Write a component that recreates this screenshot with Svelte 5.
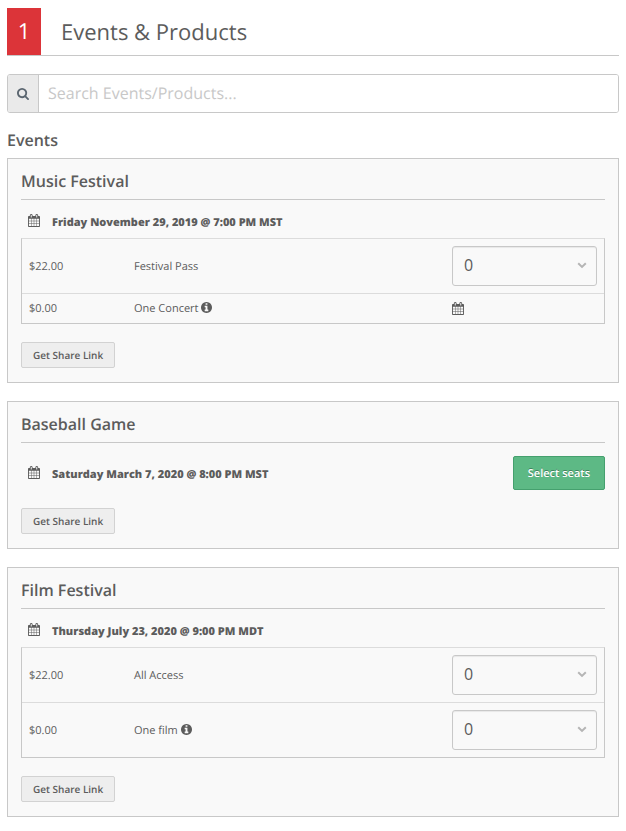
<script lang="ts">
	type Product = {
		id: string;
		price: string;
		name: string;
		info?: boolean;
		pickDate?: boolean;
		quantity: number;
	};

	type EventItem = {
		title: string;
		date: string;
		seated?: boolean;
		products: Product[];
	};

	let search = $state('');

	let events: EventItem[] = $state([
		{
			title: 'Music Festival',
			date: 'Friday November 29, 2019 @ 7:00 PM MST',
			products: [
				{ id: 'festival-pass', price: '$22.00', name: 'Festival Pass', quantity: 0 },
				{ id: 'one-concert', price: '$0.00', name: 'One Concert', info: true, pickDate: true, quantity: 0 }
			]
		},
		{
			title: 'Baseball Game',
			date: 'Saturday March 7, 2020 @ 8:00 PM MST',
			seated: true,
			products: []
		},
		{
			title: 'Film Festival',
			date: 'Thursday July 23, 2020 @ 9:00 PM MDT',
			products: [
				{ id: 'all-access', price: '$22.00', name: 'All Access', quantity: 0 },
				{ id: 'one-film', price: '$0.00', name: 'One film', info: true, quantity: 0 }
			]
		}
	]);

	const quantities = [0, 1, 2, 3, 4, 5, 6, 7, 8, 9, 10];
</script>

{#snippet calendarIcon()}
	<svg class="calendar" viewBox="64 0 1664 1792" width="12" height="13" aria-hidden="true">
		<path d="M192 1664h288v-288h-288v288zm352 0h320v-288h-320v288zm-352-352h288v-320h-288v320zm352 0h320v-320h-320v320zm-352-384h288v-288h-288v288zm736 736h320v-288h-320v288zm-384-736h320v-288h-320v288zm768 736h288v-288h-288v288zm-384-352h320v-320h-320v320zm-352-864v-288q0-13-9.5-22.5t-22.5-9.5h-64q-13 0-22.5 9.5t-9.5 22.5v288q0 13 9.5 22.5t22.5 9.5h64q13 0 22.5-9.5t9.5-22.5zm736 864h288v-320h-288v320zm-384-384h320v-288h-320v288zm384 0h288v-288h-288v288zm32-480v-288q0-13-9.5-22.5t-22.5-9.5h-64q-13 0-22.5 9.5t-9.5 22.5v288q0 13 9.5 22.5t22.5 9.5h64q13 0 22.5-9.5t9.5-22.5zm384-64v1280q0 52-38 90t-90 38h-1408q-52 0-90-38t-38-90v-1280q0-52 38-90t90-38h128v-96q0-66 47-113t113-47h64q66 0 113 47t47 113v96h384v-96q0-66 47-113t113-47h64q66 0 113 47t47 113v96h128q52 0 90 38t38 90z" />
	</svg>
{/snippet}

<main>
	<header>
		<span class="step">1</span>
		<h1>Events &amp; Products</h1>
	</header>

	<div class="search">
		<label for="search-input" aria-label="Search">
			<svg viewBox="64 128 1664 1664" width="12" height="12" aria-hidden="true">
				<path d="M1216 832q0-185-131.5-316.5t-316.5-131.5-316.5 131.5-131.5 316.5 131.5 316.5 316.5 131.5 316.5-131.5 131.5-316.5zm512 832q0 52-38 90t-90 38q-54 0-90-38l-343-342q-179 124-399 124-143 0-273.5-55.5t-225-150-150-225-55.5-273.5 55.5-273.5 150-225 225-150 273.5-55.5 273.5 55.5 225 150 150 225 55.5 273.5q0 220-124 399l343 343q37 37 37 90z" />
			</svg>
		</label>
		<input type="text" id="search-input" placeholder="Search Events/Products..." bind:value={search} />
	</div>

	<h2>Events</h2>

	{#each events as event}
		<section class="panel">
			<h3>{event.title}</h3>

			<div class="date-row" class:seated={event.seated}>
				<div class="date">
					{@render calendarIcon()}
					<strong>{event.date}</strong>
				</div>
				{#if event.seated}
					<button type="button" class="seats-btn">Select seats</button>
				{/if}
			</div>

			{#if event.products.length}
				<table>
					<tbody>
						{#each event.products as product}
							<tr>
								<td class="price">{product.price}</td>
								<td>
									<label for={product.id}>{product.name}</label>
									{#if product.info}
										<svg class="info" viewBox="128 128 1536 1536" width="11" height="11" aria-hidden="true">
											<path d="M1152 1376v-160q0-14-9-23t-23-9h-96v-512q0-14-9-23t-23-9h-320q-14 0-23 9t-9 23v160q0 14 9 23t23 9h96v320h-96q-14 0-23 9t-9 23v160q0 14 9 23t23 9h448q14 0 23-9t9-23zm-128-896v-160q0-14-9-23t-23-9h-192q-14 0-23 9t-9 23v160q0 14 9 23t23 9h192q14 0 23-9t9-23zm640 416q0 209-103 385.5t-279.5 279.5-385.5 103-385.5-103-279.5-279.5-103-385.5 103-385.5 279.5-279.5 385.5-103 385.5 103 279.5 279.5 103 385.5z" />
										</svg>
									{/if}
								</td>
								<td class="quantity">
									{#if product.pickDate}
										<button type="button" class="pick-date" id={product.id} aria-label="Choose a date">
											{@render calendarIcon()}
										</button>
									{:else}
										<div class="select">
											<select id={product.id} bind:value={product.quantity}>
												{#each quantities as n}
													<option value={n}>{n}</option>
												{/each}
											</select>
											<svg class="chevron" viewBox="0 0 10 7" width="10" height="7" aria-hidden="true">
												<path d="M1.2 1.3 5 4.9 8.8 1.3" />
											</svg>
										</div>
									{/if}
								</td>
							</tr>
						{/each}
					</tbody>
				</table>
			{/if}

			<button type="button" class="share-btn">Get Share Link</button>
		</section>
	{/each}
</main>

<style>
	:global(body) {
		background: #fff;
		color: #5c5c5c;
		font-family: "Open Sans", "Noto Sans", sans-serif;
		font-size: 11px;
		text-rendering: geometricPrecision;
	}

	main {
		padding: 8px 7px 14px;
	}

	header {
		display: flex;
		align-items: center;
		border-bottom: 1px solid #c8c8c8;
	}

	.step {
		width: 34px;
		background: #dc3439;
		color: #fff;
		font-size: 22px;
		line-height: 47px;
		text-align: center;
	}

	h1 {
		margin: 0 0 0 20px;
		font-size: 22px;
		font-weight: 400;
		line-height: 30px;
	}

	.search {
		display: flex;
		margin-top: 18px;
		border: 1px solid #c8c8c8;
		border-radius: 3px;
		overflow: hidden;
	}

	.search label {
		display: flex;
		align-items: center;
		justify-content: center;
		width: 30px;
		background: #eaeaea;
		border-right: 1px solid #c8c8c8;
		color: #5b6670;
	}

	.search input {
		flex: 1;
		min-width: 0;
		height: 37px;
		box-sizing: border-box;
		padding: 0 9px 2px;
		border: none;
		background: #fff;
		color: inherit;
		font-family: inherit;
		font-size: 16px;
		text-rendering: inherit;
	}

	.search input::placeholder {
		color: #c8c8c8;
		opacity: 1;
	}

	svg {
		display: block;
		fill: currentColor;
	}

	h2,
	h3 {
		margin: 0;
		font-size: 16px;
		font-weight: 600;
		line-height: 24px;
	}

	h2 {
		margin: 15px 0 6px;
	}

	.panel {
		padding: 0 13px 14px;
		border: 1px solid #c8c8c8;
		background: #f9f9f9;
	}

	.panel + .panel {
		margin-top: 18px;
	}

	h3 {
		padding: 10px 0 6px;
		border-bottom: 1px solid #c8c8c8;
	}

	.date-row {
		display: flex;
		align-items: center;
		justify-content: space-between;
		padding: 14px 0 6px;
	}

	.date-row.seated {
		padding: 13px 0 0;
	}

	.date {
		display: flex;
		align-items: flex-start;
		gap: 12px;
		padding-left: 7px;
		line-height: 18px;
	}

	.seated .date {
		padding-top: 4px;
	}

	.date strong {
		font-weight: 800;
	}

	table {
		width: 100%;
		table-layout: fixed;
		border: 1px solid #c8c8c8;
		border-top-color: #dcdcdc;
		border-spacing: 0;
	}

	td {
		padding: 7px;
		line-height: 15px;
		vertical-align: middle;
	}

	tr + tr td {
		border-top: 1px solid #dcdcdc;
	}

	.price {
		width: 91px;
	}

	.quantity {
		width: 145px;
	}

	.info {
		display: inline-block;
		vertical-align: -1px;
	}

	.pick-date {
		display: block;
		padding: 1px 0;
		border: none;
		background: none;
		color: inherit;
		cursor: pointer;
	}

	.select {
		position: relative;
	}

	select {
		display: block;
		width: 100%;
		height: 40px;
		padding: 0 30px 2px 11px;
		border: 1px solid #c8c8c8;
		border-radius: 3px;
		background: #f9f9f9;
		box-shadow: inset 0 1px 1px rgba(0, 0, 0, 0.07);
		color: #5c5c5c;
		font-family: inherit;
		font-size: 16px;
		appearance: none;
	}

	.chevron {
		position: absolute;
		top: 16px;
		right: 10px;
		fill: none;
		stroke: #b5b5b5;
		stroke-width: 2;
		pointer-events: none;
	}

	.share-btn,
	.seats-btn {
		display: block;
		border-radius: 2px;
		font-family: inherit;
		text-rendering: inherit;
		cursor: pointer;
	}

	.share-btn {
		height: 26px;
		margin-top: 18px;
		padding: 0 11px;
		border: 1px solid #d2d2d2;
		background: #eee;
		color: #5c5c5c;
		font-size: 10px;
		font-weight: 600;
	}

	.seats-btn {
		height: 34px;
		padding: 0 14px;
		border: 1px solid #45a06e;
		background: #5db985;
		color: #fff;
		font-size: 11px;
		font-weight: 600;
		text-shadow: 0 -1px 0 rgba(0, 0, 0, 0.3);
	}
</style>
